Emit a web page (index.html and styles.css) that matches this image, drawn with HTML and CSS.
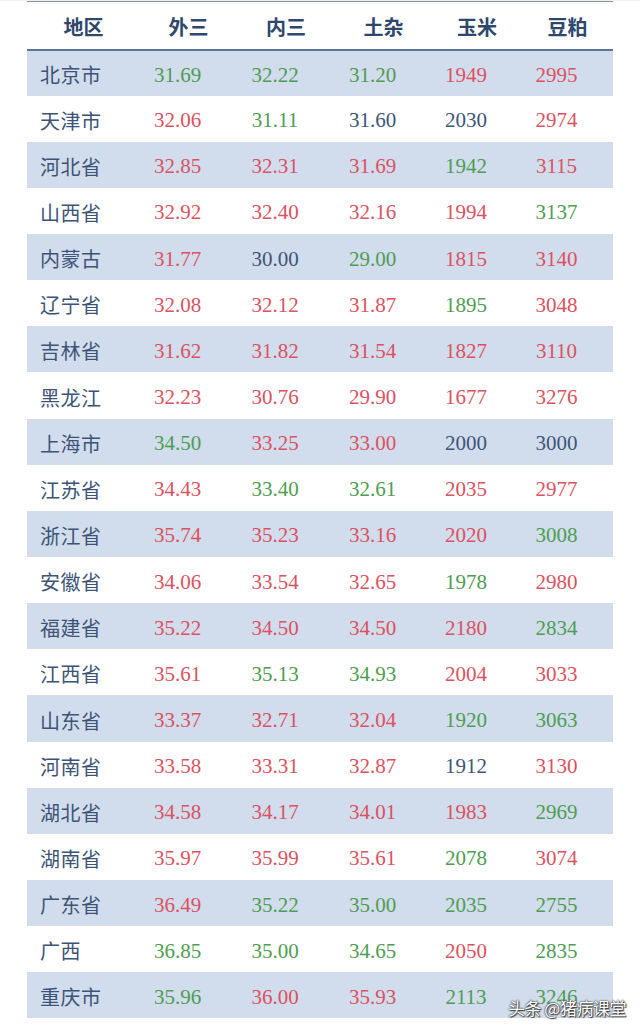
FILE: index.html
```html
<!DOCTYPE html>
<html lang="zh">
<head>
<meta charset="utf-8">
<title>各地区价格</title>
<link rel="stylesheet" href="styles.css">
</head>
<body>
<div class="frame">
  <table class="prices">
    <colgroup>
      <col class="c-region"><col class="c-a"><col class="c-b"><col class="c-c"><col class="c-d"><col class="c-e">
    </colgroup>
    <thead>
      <tr><th>地区</th><th>外三</th><th>内三</th><th>土杂</th><th>玉米</th><th>豆粕</th></tr>
    </thead>
    <tbody>
      <tr class="band"><td>北京市</td><td class="g">31.69</td><td class="g">32.22</td><td class="g">31.20</td><td class="r">1949</td><td class="r">2995</td></tr>
      <tr><td>天津市</td><td class="r">32.06</td><td class="g">31.11</td><td class="n">31.60</td><td class="n">2030</td><td class="r">2974</td></tr>
      <tr class="band"><td>河北省</td><td class="r">32.85</td><td class="r">32.31</td><td class="r">31.69</td><td class="g">1942</td><td class="r">3115</td></tr>
      <tr><td>山西省</td><td class="r">32.92</td><td class="r">32.40</td><td class="r">32.16</td><td class="r">1994</td><td class="g">3137</td></tr>
      <tr class="band"><td>内蒙古</td><td class="r">31.77</td><td class="n">30.00</td><td class="g">29.00</td><td class="r">1815</td><td class="r">3140</td></tr>
      <tr><td>辽宁省</td><td class="r">32.08</td><td class="r">32.12</td><td class="r">31.87</td><td class="g">1895</td><td class="r">3048</td></tr>
      <tr class="band"><td>吉林省</td><td class="r">31.62</td><td class="r">31.82</td><td class="r">31.54</td><td class="r">1827</td><td class="r">3110</td></tr>
      <tr><td>黑龙江</td><td class="r">32.23</td><td class="r">30.76</td><td class="r">29.90</td><td class="r">1677</td><td class="r">3276</td></tr>
      <tr class="band"><td>上海市</td><td class="g">34.50</td><td class="r">33.25</td><td class="r">33.00</td><td class="n">2000</td><td class="n">3000</td></tr>
      <tr><td>江苏省</td><td class="r">34.43</td><td class="g">33.40</td><td class="g">32.61</td><td class="r">2035</td><td class="r">2977</td></tr>
      <tr class="band"><td>浙江省</td><td class="r">35.74</td><td class="r">35.23</td><td class="r">33.16</td><td class="r">2020</td><td class="g">3008</td></tr>
      <tr><td>安徽省</td><td class="r">34.06</td><td class="r">33.54</td><td class="r">32.65</td><td class="g">1978</td><td class="r">2980</td></tr>
      <tr class="band"><td>福建省</td><td class="r">35.22</td><td class="r">34.50</td><td class="r">34.50</td><td class="r">2180</td><td class="g">2834</td></tr>
      <tr><td>江西省</td><td class="r">35.61</td><td class="g">35.13</td><td class="g">34.93</td><td class="r">2004</td><td class="r">3033</td></tr>
      <tr class="band"><td>山东省</td><td class="r">33.37</td><td class="r">32.71</td><td class="r">32.04</td><td class="g">1920</td><td class="g">3063</td></tr>
      <tr><td>河南省</td><td class="r">33.58</td><td class="r">33.31</td><td class="r">32.87</td><td class="n">1912</td><td class="r">3130</td></tr>
      <tr class="band"><td>湖北省</td><td class="r">34.58</td><td class="r">34.17</td><td class="r">34.01</td><td class="r">1983</td><td class="g">2969</td></tr>
      <tr><td>湖南省</td><td class="r">35.97</td><td class="r">35.99</td><td class="r">35.61</td><td class="g">2078</td><td class="r">3074</td></tr>
      <tr class="band"><td>广东省</td><td class="r">36.49</td><td class="g">35.22</td><td class="g">35.00</td><td class="g">2035</td><td class="g">2755</td></tr>
      <tr><td>广西</td><td class="g">36.85</td><td class="g">35.00</td><td class="g">34.65</td><td class="r">2050</td><td class="g">2835</td></tr>
      <tr class="band"><td>重庆市</td><td class="g">35.96</td><td class="r">36.00</td><td class="r">35.93</td><td class="g">2113</td><td class="g">3246</td></tr>
    </tbody>
  </table>
  <div class="watermark">头条 @猪病课堂</div>
</div>
</body>
</html>
```

FILE: styles.css
```css
html, body {
  margin: 0;
  padding: 0;
  background: #ffffff;
}

.frame {
  position: relative;
  width: 640px;
  height: 1031px;
  border-top: 1px solid #f0f0f0;
  box-sizing: border-box;
  overflow: hidden;
}

.prices {
  margin: 0 27px;
  width: 586px;
  table-layout: fixed;
  border-collapse: collapse;
  border-top: 1px solid #8e939b;
}

.c-region { width: 113px; }
.c-a { width: 97px; }
.c-b { width: 98px; }
.c-c { width: 97px; }
.c-d { width: 90px; }
.c-e { width: 91px; }

.prices th {
  height: 48px;
  padding: 4px 0 0 0;
  box-sizing: border-box;
  font-family: "Noto Sans CJK SC", "Noto Sans", sans-serif;
  font-weight: 700;
  font-size: 20px;
  color: #2f476c;
  text-align: center;
  vertical-align: middle;
  border-bottom: 2px solid #5c7597;
  line-height: 1;
}

.prices td {
  height: 46.15px;
  padding: 4px 22px 0 0;
  font-family: "Liberation Serif", "Times New Roman", serif;
  font-size: 21px;
  text-align: center;
  vertical-align: middle;
  line-height: 1;
  color: #3e5577;
  box-sizing: border-box;
}

.prices td:first-child {
  font-family: "Noto Sans CJK SC", "Noto Sans", sans-serif;
  font-size: 20px;
  text-align: left;
  padding: 4px 0 0 13px;
  letter-spacing: 0.5px;
  color: #3d5477;
}

.band td {
  background: #d1dcec;
}

.prices td.g { color: #4e9d52; }
.prices td.r { color: #dc5260; }
.prices td.n { color: #3e5577; }

.watermark {
  position: absolute;
  left: 508px;
  top: 994px;
  font-family: "Noto Sans CJK SC", "Noto Sans", sans-serif;
  font-size: 17px;
  color: #ffffff;
  white-space: nowrap;
  text-shadow: 0 0 1px #333, 0 0 2px #333, 1px 1px 1px #444;
  letter-spacing: -0.5px;
}
```
